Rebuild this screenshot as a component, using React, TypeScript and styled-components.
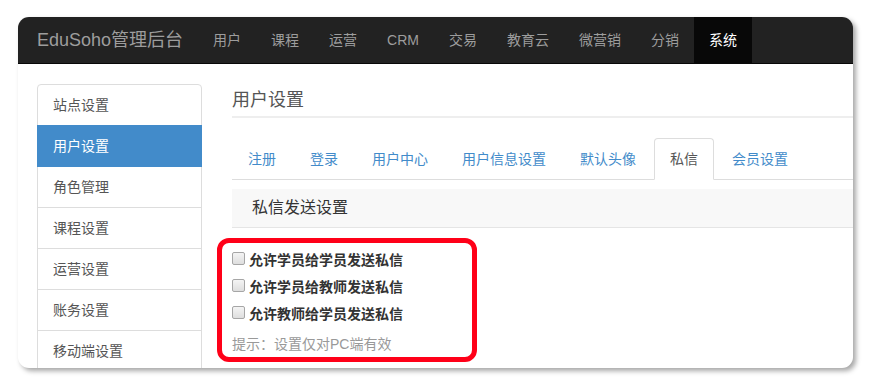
import styled, { createGlobalStyle } from "styled-components";

const GlobalStyle = createGlobalStyle`
  html, body {
    margin: 0;
    padding: 0;
    background: #fff;
  }
  body {
    font-family: "Liberation Sans", "Noto Sans CJK SC", sans-serif;
    font-size: 14px;
    color: #333;
  }
  * {
    box-sizing: border-box;
  }
`;

const Page = styled.div`
  width: 871px;
  height: 387px;
  padding: 17px 0 0 18px;
  overflow: hidden;
`;

const Window = styled.div`
  width: 835px;
  height: 351px;
  border-radius: 11px;
  overflow: hidden;
  background: #fff;
  box-shadow: 3px 3px 5px rgba(0, 0, 0, 0.35);
  display: flex;
  flex-direction: column;
`;

const Navbar = styled.div`
  height: 47px;
  flex: none;
  background: #222;
  border-bottom: 1px solid #080808;
  display: flex;
  align-items: stretch;
  padding-left: 4px;
`;

const Brand = styled.a`
  padding: 0 15px;
  font-size: 18px;
  line-height: 46px;
  color: #9d9d9d;
  white-space: nowrap;
`;

const NavLink = styled.a<{ active?: boolean }>`
  padding: 0 15px;
  font-size: 14px;
  line-height: 46px;
  white-space: nowrap;
  color: ${p => (p.active ? "#fff" : "#9d9d9d")};
  background: ${p => (p.active ? "#080808" : "transparent")};
`;

const Body = styled.div`
  display: flex;
  padding: 20px 0 0 19px;
  flex: 1;
  min-height: 0;
`;

const Sidebar = styled.ul`
  list-style: none;
  margin: 0;
  padding: 0;
  width: 165px;
  flex: none;
`;

const SideItem = styled.li<{ active?: boolean }>`
  padding: 10px 15px;
  line-height: 20px;
  font-size: 14px;
  margin-bottom: -1px;
  border: 1px solid ${p => (p.active ? "#428bca" : "#ddd")};
  background: ${p => (p.active ? "#428bca" : "#fff")};
  color: ${p => (p.active ? "#fff" : "#555")};
  position: relative;
  z-index: ${p => (p.active ? 2 : 1)};
  &:first-child {
    border-top-left-radius: 4px;
    border-top-right-radius: 4px;
  }
`;

const Main = styled.div`
  flex: 1;
  margin-left: 30px;
  min-width: 0;
`;

const PageHeader = styled.h1`
  margin: 0;
  padding: 4px 0 4px;
  font-size: 18px;
  font-weight: 400;
  line-height: 24px;
  color: #555;
  border-bottom: 2px solid #eee;
`;

const Tabs = styled.ul`
  list-style: none;
  margin: 20px 0 0;
  padding: 0;
  display: flex;
  border-bottom: 1px solid #ddd;
`;

const Tab = styled.li<{ active?: boolean }>`
  margin: 0 2px -1px 0;
  padding: 10px 15px;
  line-height: 20px;
  font-size: 14px;
  white-space: nowrap;
  border: 1px solid ${p => (p.active ? "#ddd" : "transparent")};
  border-bottom-color: ${p => (p.active ? "#fff" : "transparent")};
  border-radius: 4px 4px 0 0;
  background: ${p => (p.active ? "#fff" : "transparent")};
  color: ${p => (p.active ? "#555" : "#428bca")};
`;

const PanelHeading = styled.div`
  margin-top: 9px;
  padding: 10px 20px;
  font-size: 16px;
  line-height: 18px;
  color: #333;
  background: #f8f8f8;
  border-bottom: 1px solid #e5e5e5;
`;

const Form = styled.div`
  position: relative;
  margin-top: 17px;
`;

const CheckRow = styled.label`
  display: flex;
  align-items: center;
  height: 27px;
  font-size: 14px;
  font-weight: 700;
  color: #333;
  white-space: nowrap;
`;

const Check = styled.input`
  appearance: none;
  width: 13px;
  height: 13px;
  margin: 0 4px 0 0;
  border: 1px solid #a6a6a6;
  border-radius: 2px;
  background: linear-gradient(#f4f4f4, #dedede);
`;

const Hint = styled.div`
  margin-top: 8px;
  line-height: 20px;
  font-size: 14px;
  color: #999;
`;

const Annotation = styled.div`
  position: absolute;
  left: -15px;
  top: -7px;
  width: 260px;
  height: 124px;
  border: 5px solid #ff0018;
  border-radius: 12px;
  pointer-events: none;
`;

const navItems = ["用户", "课程", "运营", "CRM", "交易", "教育云", "微营销", "分销", "系统"];
const sideItems = ["站点设置", "用户设置", "角色管理", "课程设置", "运营设置", "账务设置", "移动端设置"];
const tabItems = ["注册", "登录", "用户中心", "用户信息设置", "默认头像", "私信", "会员设置"];
const checks = ["允许学员给学员发送私信", "允许学员给教师发送私信", "允许教师给学员发送私信"];

const App = () => {
  return (
    <>
      <GlobalStyle />
      <Page>
        <Window>
          <Navbar>
            <Brand>EduSoho管理后台</Brand>
            {navItems.map(item => (
              <NavLink key={item} active={item === "系统"}>
                {item}
              </NavLink>
            ))}
          </Navbar>
          <Body>
            <Sidebar>
              {sideItems.map(item => (
                <SideItem key={item} active={item === "用户设置"}>
                  {item}
                </SideItem>
              ))}
            </Sidebar>
            <Main>
              <PageHeader>用户设置</PageHeader>
              <Tabs>
                {tabItems.map(item => (
                  <Tab key={item} active={item === "私信"}>
                    {item}
                  </Tab>
                ))}
              </Tabs>
              <PanelHeading>私信发送设置</PanelHeading>
              <Form>
                {checks.map(item => (
                  <CheckRow key={item}>
                    <Check type="checkbox" />
                    {item}
                  </CheckRow>
                ))}
                <Hint>提示：设置仅对PC端有效</Hint>
                <Annotation />
              </Form>
            </Main>
          </Body>
        </Window>
      </Page>
    </>
  );
};

export default App;
